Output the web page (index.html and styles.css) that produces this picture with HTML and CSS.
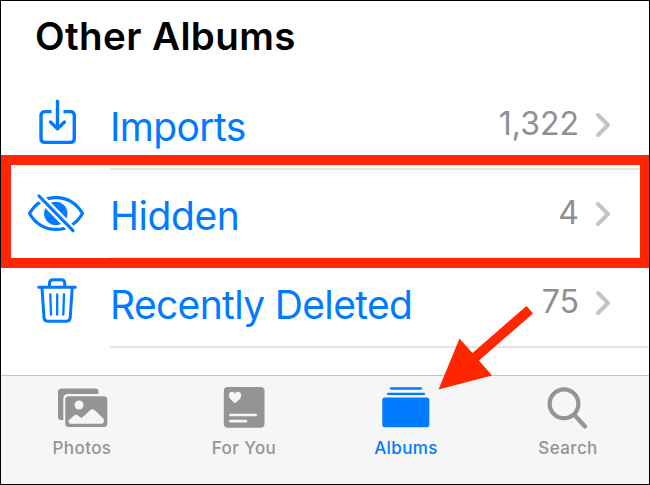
FILE: index.html
```
<!DOCTYPE html>
<html lang="en">
<head>
<meta charset="utf-8">
<title>Albums</title>
<link rel="stylesheet" href="styles.css">
</head>
<body>
<div class="screen">
  <main class="content">
    <h1 class="heading">Other Albums</h1>
    <div class="row">
      <svg class="row-icon" viewBox="0 0 60 60" fill="none" stroke="currentColor" stroke-width="3.4" stroke-linecap="round" stroke-linejoin="round"><path stroke-linecap="butt" d="M24.500 17.600H18Q14 17.600 14 21.600V44.400Q14 48.400 18 48.400H43.300Q47.300 48.400 47.300 44.400V21.600Q47.300 17.600 43.300 17.600H36.500"/><path d="M30.500 7.200V34.500M23.500 28L30.500 34.700L37.500 28"/></svg>
      <div class="line"><span class="name imports">Imports</span><span class="count thousands">1,322</span><svg class="chevron" viewBox="0 0 18 28"><path d="M4 4L14 14L4 24"/></svg></div>
    </div>
    <div class="row">
      <svg class="row-icon" viewBox="0 0 60 60" fill="none" stroke="currentColor" stroke-width="3.200" stroke-linejoin="round"><path d="M2.500 30.500C9 19.500 19 14.600 29 14.600S49 19.500 55.500 30.500C49 41.500 39 46.400 29 46.400S9 41.500 2.500 30.500Z"/><circle cx="28.800" cy="30.500" r="11.700" fill="currentColor" stroke="none"/><path class="cut" d="M13 14L45 46.700"/><path stroke-linecap="round" d="M12 13L46 47.700"/></svg>
      <div class="line"><span class="name hidden">Hidden</span><span class="count">4</span><svg class="chevron" viewBox="0 0 18 28"><path d="M4 4L14 14L4 24"/></svg></div>
    </div>
    <div class="row">
      <svg class="row-icon" viewBox="0 0 60 60" fill="none" stroke="currentColor" stroke-width="3" stroke-linecap="round" stroke-linejoin="round"><path d="M11.700 15.300H48.300M22.500 15V11.500Q22.500 7.800 26 7.800H34.200Q37.700 7.800 37.700 11.500V15M15 16L17 45.700Q17.300 49.200 20.500 49.200H39.700Q42.900 49.200 43.200 45.700L45.200 16"/><path stroke-width="2.300" d="M23.300 22.300L24 42.700M30.200 22.300V42.700M37 22.300L36.300 42.700"/></svg>
      <div class="line"><span class="name deleted">Recently Deleted</span><span class="count">75</span><svg class="chevron" viewBox="0 0 18 28"><path d="M4 4L14 14L4 24"/></svg></div>
    </div>
  </main>
  <nav class="tabs">
    <div class="tab">
      <svg class="tab-icon" viewBox="0 0 56 48"><path fill="currentColor" d="M7 38Q4 38 4 35V10Q4 6.500 7.500 6.500H41.500Q44.500 6.500 44.500 9.500V12H14Q9.300 12 9.300 17V38Z"/><rect x="11.300" y="14.300" width="42" height="30.600" rx="3.500" fill="currentColor"/><circle cx="25" cy="23" r="4.500" fill="#f6f6f6"/><path fill="#f6f6f6" d="M14.500 38.500L20 33.500Q22 32 24 33.500L27.500 36L36.500 28Q38.500 26.500 40.500 28L49.800 37V39.500Q49.800 41.700 47.500 41.700H17Q14.500 41.700 14.500 39.500Z"/></svg>
      <span class="label">Photos</span>
    </div>
    <div class="tab">
      <svg class="tab-icon" viewBox="0 0 56 48"><rect x="7.800" y="5" width="40.700" height="40.700" rx="4" fill="currentColor"/><path fill="#f6f6f6" d="M19 21.200C15 18.300 12.800 16 12.800 13.300C12.800 9.300 17.300 8.600 19 11.700C20.700 8.600 25.200 9.300 25.200 13.300C25.200 16 23 18.300 19 21.200Z"/><path stroke="#f6f6f6" stroke-width="2.700" stroke-linecap="round" d="M14.300 33H39.700M14.300 39.200H30"/></svg>
      <span class="label">For You</span>
    </div>
    <div class="tab active">
      <svg class="tab-icon" viewBox="0 0 56 48"><rect x="4.300" y="15.500" width="47" height="29.700" rx="2.500" fill="currentColor"/><path stroke="currentColor" stroke-width="2.300" stroke-linecap="round" d="M13 6.500H43M10 11.800H46"/></svg>
      <span class="label">Albums</span>
    </div>
    <div class="tab">
      <svg class="tab-icon" viewBox="0 0 56 48" fill="none" stroke="currentColor" stroke-width="4.200" stroke-linecap="round"><circle cx="24" cy="21.800" r="14.400"/><path d="M34.500 33L45 44.500"/></svg>
      <span class="label">Search</span>
    </div>
  </nav>
  <div class="highlight"></div>
  <svg class="arrow" viewBox="0 0 100 90"><path fill="#ff2600" d="M8.500 89.500L29.500 38.500L42.500 53L96.500 6L103 13.500L49 60.500L62 75.500Z"/></svg>
</div>
</body>
</html>
```
FILE: styles.css
```
* { box-sizing: border-box; }
body {
  margin: 0;
  font-family: Inter, "Liberation Sans", sans-serif;
}
.screen {
  position: relative;
  width: 650px;
  height: 485px;
  border: 1px solid #000;
  background: #fff;
  display: flex;
  flex-direction: column;
  overflow: hidden;
}
.content { height: 374px; }
.heading {
  margin: 0;
  height: 80px;
  padding-left: 34px;
  font-size: 38.5px;
  line-height: 71px;
  font-weight: 600;
  letter-spacing: 0.4px;
  white-space: nowrap;
}
.row {
  display: flex;
  align-items: center;
  height: 89px;
  padding-left: 26px;
  color: #007aff;
}
.row-icon { width: 60px; height: 60px; flex: none; margin-top: -3px; }
.cut { stroke: #fff; stroke-width: 8; }
.line {
  display: flex;
  align-items: center;
  flex: 1;
  height: 89px;
  margin-left: 23px;
  padding-right: 37px;
  border-bottom: 2px solid #e5e5e6;
}
.name {
  flex: 1;
  font-size: 39px;
  line-height: 48px;
  padding-top: 4px;
  letter-spacing: -0.65px;
  white-space: nowrap;
}
.hidden { letter-spacing: -0.45px; }
.count {
  font-size: 32px;
  line-height: 40px;
  color: #8e8e93;
  margin: 0 15px 1px 0;
}
.chevron {
  width: 18px;
  height: 28px;
  fill: none;
  stroke: #c4c4c6;
  stroke-width: 4;
  stroke-linecap: round;
  stroke-linejoin: round;
}
.tabs {
  display: flex;
  height: 109px;
  border-top: 1px solid #c4c4c4;
  background: #f6f6f6;
}
.tab {
  flex: 1;
  display: flex;
  flex-direction: column;
  align-items: center;
  padding-top: 6px;
  color: #949494;
}
.tab.active { color: #007aff; }
.tab-icon { width: 56px; height: 48px; }
.label {
  font-size: 17px;
  line-height: 22px;
  font-weight: 500;
  letter-spacing: 0.4px;
  margin-top: 7px;
}
.highlight {
  position: absolute;
  left: 0;
  top: 154px;
  width: 648px;
  height: 113px;
  border: 10px solid #ff2600;
  border-right-width: 9px;
}
.arrow {
  position: absolute;
  left: 429px;
  top: 299px;
  width: 100px;
  height: 90px;
  overflow: visible;
}
```
